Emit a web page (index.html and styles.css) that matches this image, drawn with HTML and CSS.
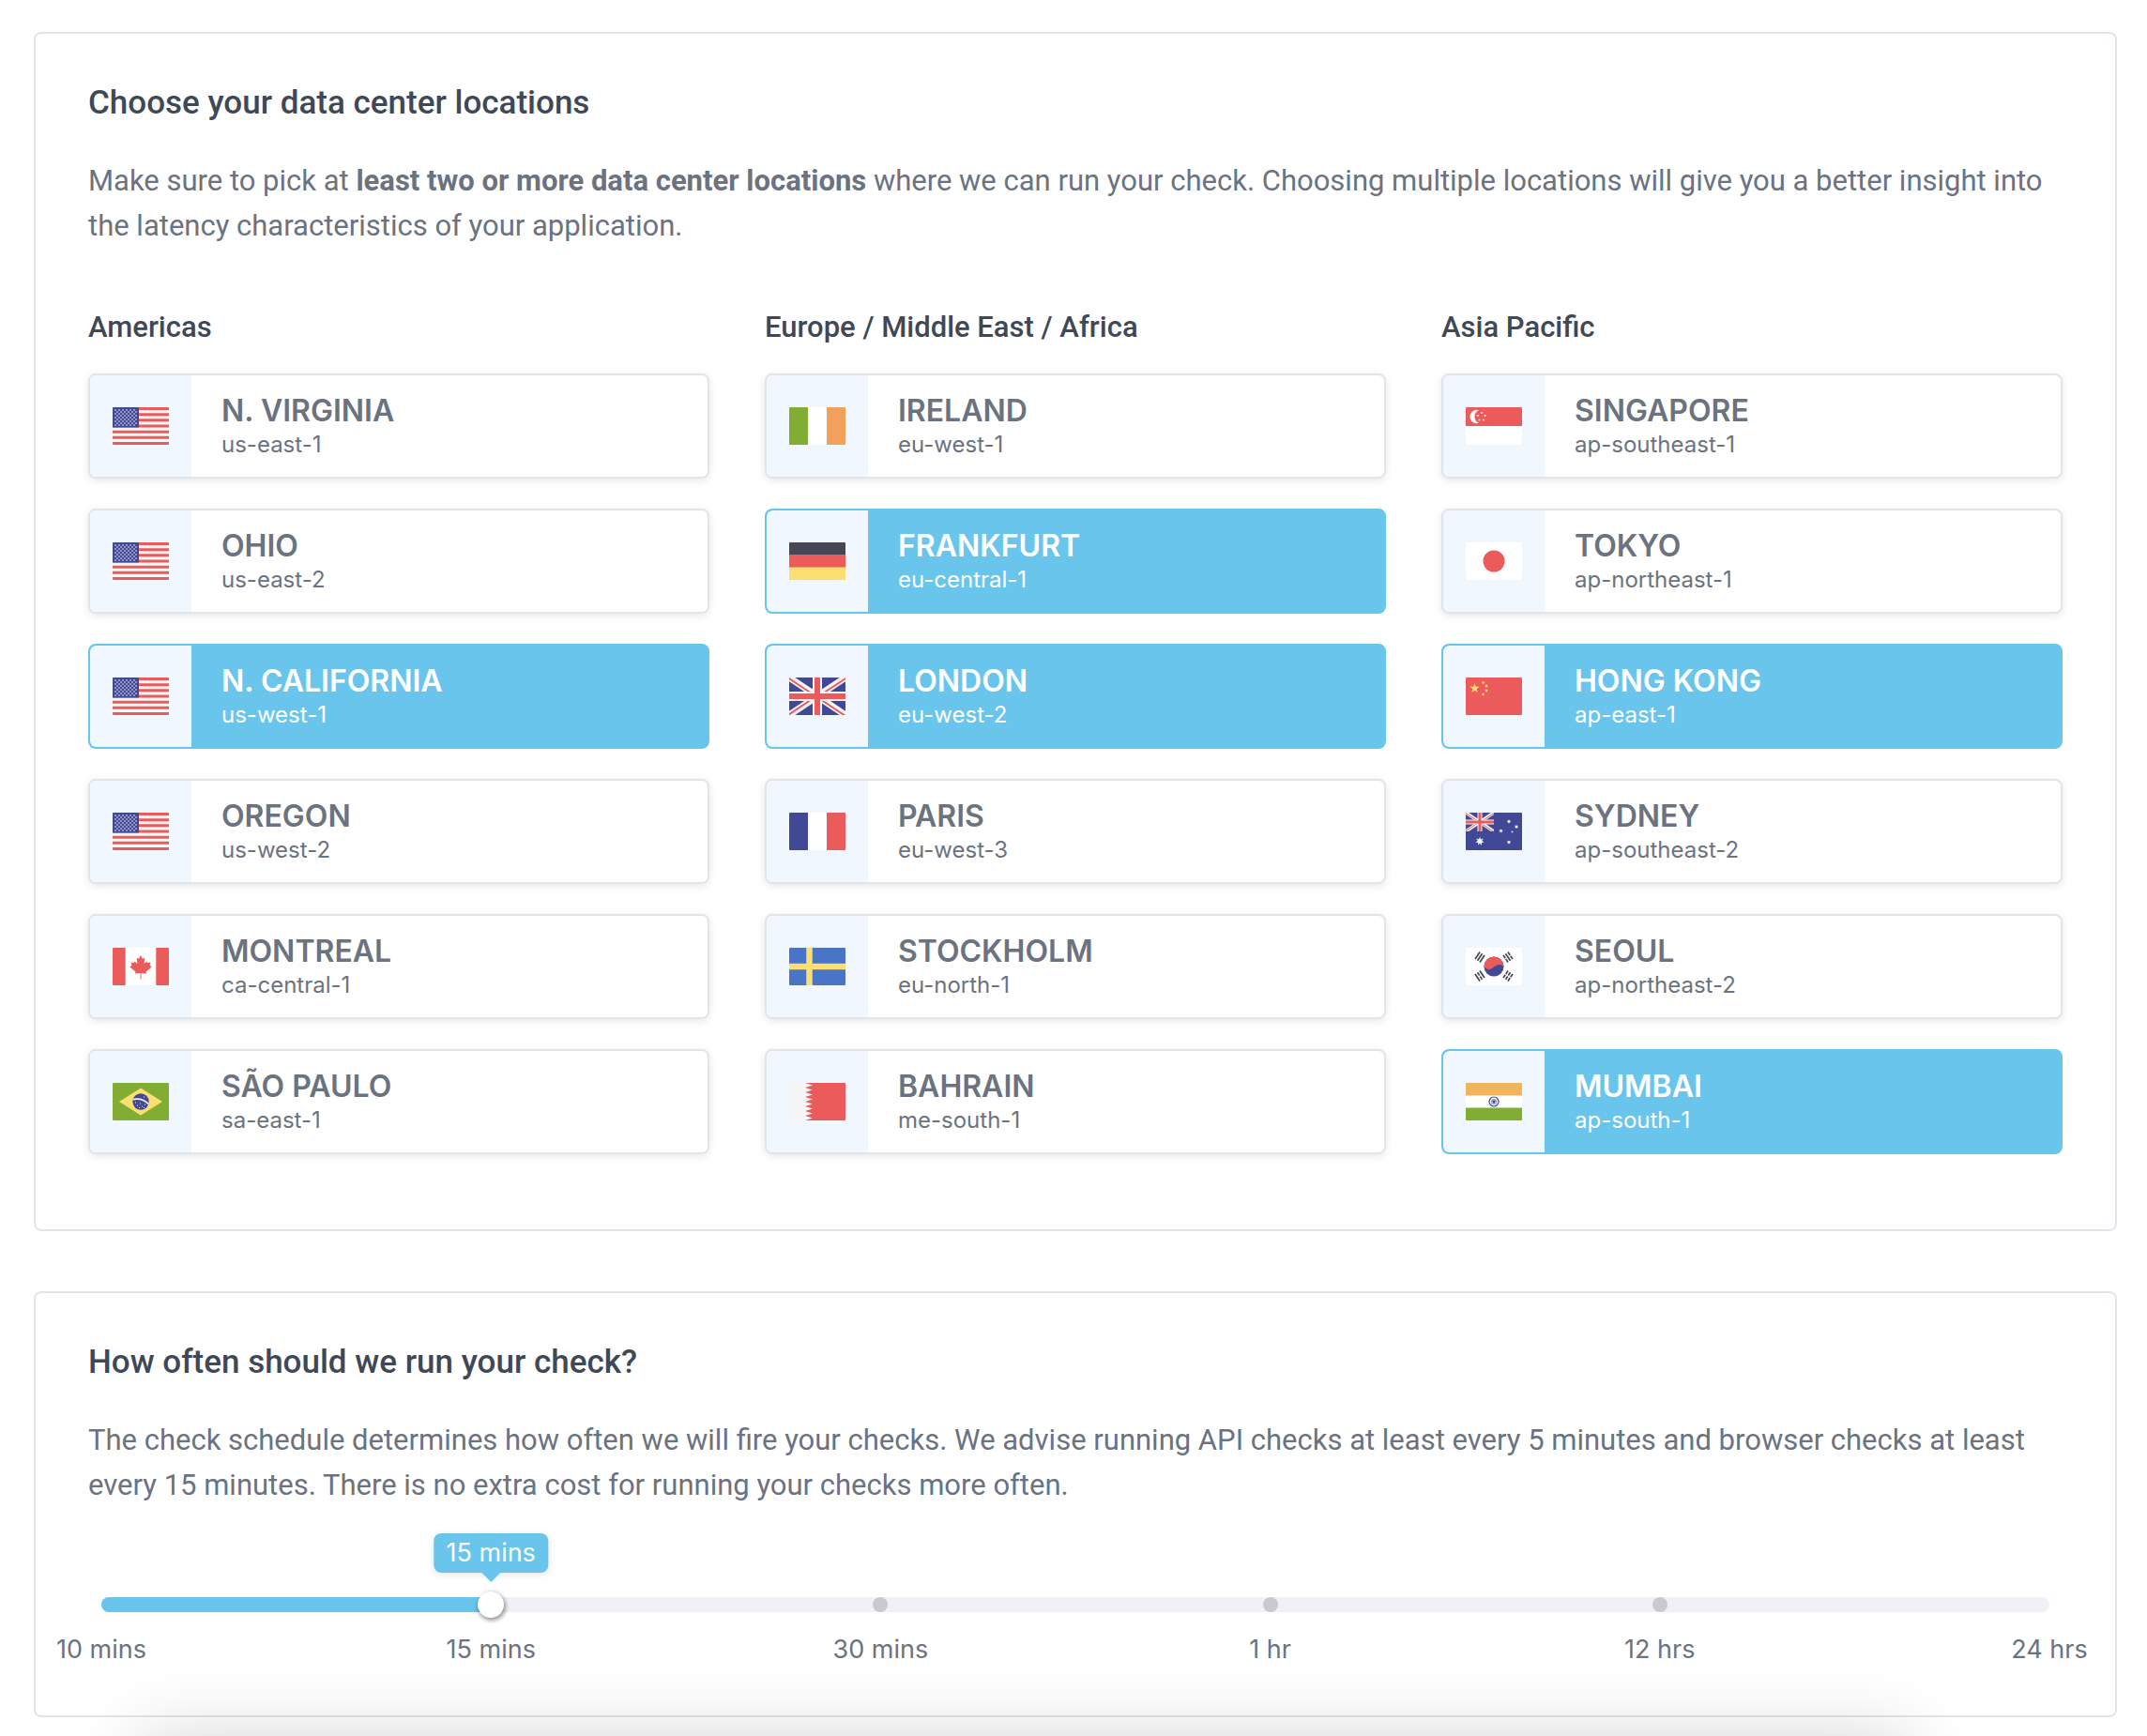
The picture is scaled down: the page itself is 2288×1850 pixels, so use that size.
FILE: index.html
```html
<!DOCTYPE html>
<html lang="en">
<head>
  <meta charset="UTF-8">
  <meta name="viewport" content="width=device-width, initial-scale=1.0">
  <title>Check locations and schedule</title>
  <link rel="stylesheet" href="styles.css">
</head>
<body>
  <!-- Flag sprites -->
  <svg class="sprites" aria-hidden="true">
    <defs>
      <clipPath id="flag-clip"><rect width="60" height="40" rx="1"/></clipPath>
      <clipPath id="jack-clip"><rect width="60" height="40"/></clipPath>
      <pattern id="us-stars" width="4" height="4" patternUnits="userSpaceOnUse">
        <circle cx="1" cy="1" r=".8" fill="#f5f5f5"/>
        <circle cx="3" cy="3" r=".8" fill="#f5f5f5"/>
      </pattern>
      <path id="star" d="M0-1 .24-.32.95-.31.38.12.59.81 0 .4-.59.81-.38.12-.95-.31-.24-.32z"/>
      <path id="star7" d="M0-1 .2-.42.78-.62.46-.1.97.22.37.3.43.9 0 .47-.43.9-.37.3-.97.22-.46-.1-.78-.62-.2-.42z"/>
      <g id="jack" clip-path="url(#jack-clip)">
        <rect width="60" height="40" fill="#414896"/>
        <path d="M0 0 60 40M60 0 0 40" stroke="#f5f5f5" stroke-width="7"/>
        <path d="M-1 0.5 27 19M33 23 60 41M61 0.5 35 17.5M25 22.5-1 40" stroke="#ec5b5b" stroke-width="2"/>
        <path d="M30 0V40M0 20H60" stroke="#f5f5f5" stroke-width="10"/>
        <path d="M30 0V40M0 20H60" stroke="#ec5b5b" stroke-width="6"/>
      </g>
    </defs>

    <symbol id="us" viewBox="0 0 60 40">
      <g clip-path="url(#flag-clip)">
        <rect width="60" height="40" fill="#f5f5f5"/>
        <path d="M0 1.5H60M0 7.7H60M0 13.8H60M0 20H60M0 26.2H60M0 32.3H60M0 38.5H60" stroke="#ec5b5b" stroke-width="3"/>
        <rect width="28" height="21.5" fill="#414896"/>
        <rect x="2" y="2" width="24" height="18" fill="url(#us-stars)"/>
      </g>
    </symbol>
    <symbol id="ca" viewBox="0 0 60 40">
      <g clip-path="url(#flag-clip)">
        <rect width="60" height="40" fill="#fff"/>
        <path d="M0 0H13.7V40H0zM46.3 0H60V40H46.3z" fill="#ec5b5b"/>
        <path d="M30 8 32 11.8 34.3 10.8 33.6 17 36.4 14.4 37 16 40.4 15.4 39.6 18.8 41.6 20.4 35.6 25.4 36 27.6 30.4 27 30.5 33.4H29.5L29.6 27 24 27.6 24.4 25.4 18.4 20.4 20.4 18.8 19.6 15.4 23 16 23.6 14.4 26.4 17 25.7 10.8 28 11.8z" fill="#ec5b5b"/>
      </g>
    </symbol>
    <symbol id="br" viewBox="0 0 60 40">
      <g clip-path="url(#flag-clip)">
        <rect width="60" height="40" fill="#82ad33"/>
        <path d="M30 5.5 53 20 30 34.5 7 20z" fill="#fbe071"/>
        <circle cx="30" cy="20" r="8.7" fill="#414896"/>
        <path d="M21.5 17.6Q31.500 15.500 38.200 22.500" fill="none" stroke="#f5f5f5" stroke-width="1.8"/>
        <path d="M24 21h1M26 24h1M29 22h1M31 25h1M34 23h1M33 26.500h1M28 26.500h1M33 15h1" stroke="#f5f5f5"/>
      </g>
    </symbol>
    <symbol id="ie" viewBox="0 0 60 40">
      <g clip-path="url(#flag-clip)">
        <rect width="60" height="40" fill="#fff"/>
        <rect width="20" height="40" fill="#82ad33"/>
        <rect x="40" width="20" height="40" fill="#f3a05c"/>
      </g>
    </symbol>
    <symbol id="de" viewBox="0 0 60 40">
      <g clip-path="url(#flag-clip)">
        <rect width="60" height="40" fill="#ec5b5b"/>
        <rect width="60" height="13" fill="#464655"/>
        <rect y="26.5" width="60" height="13.5" fill="#fbe071"/>
      </g>
    </symbol>
    <symbol id="gb" viewBox="0 0 60 40">
      <use href="#jack"/>
    </symbol>
    <symbol id="fr" viewBox="0 0 60 40">
      <g clip-path="url(#flag-clip)">
        <rect width="60" height="40" fill="#fff"/>
        <rect width="20" height="40" fill="#414896"/>
        <rect x="40" width="20" height="40" fill="#ec5b5b"/>
      </g>
    </symbol>
    <symbol id="se" viewBox="0 0 60 40">
      <g clip-path="url(#flag-clip)">
        <rect width="60" height="40" fill="#4a74c6"/>
        <path d="M21.5 0V40M0 20H60" stroke="#fbe071" stroke-width="6.5"/>
      </g>
    </symbol>
    <symbol id="bh" viewBox="0 0 60 40">
      <g clip-path="url(#flag-clip)">
        <rect width="60" height="40" fill="#f5f5f5"/>
        <path d="M60 0H17L25 2.500 17 5 25 7.500 17 10 25 12.500 17 15 25 17.500 17 20 25 22.500 17 25 25 27.500 17 30 25 32.500 17 35 25 37.500 17 40H60z" fill="#ec5b5b"/>
      </g>
    </symbol>
    <symbol id="sg" viewBox="0 0 60 40">
      <g clip-path="url(#flag-clip)">
        <rect width="60" height="40" fill="#fff"/>
        <rect width="60" height="20" fill="#ec5b5b"/>
        <path d="M14 3.200A7.200 7.200 0 1 0 14 16.800 7.400 7.400 0 0 1 14 3.200z" fill="#fff"/>
        <g fill="#fff">
          <use href="#star" transform="translate(17 6) scale(1.500)"/>
          <use href="#star" transform="translate(13 9) scale(1.500)"/>
          <use href="#star" transform="translate(20.500 9) scale(1.500)"/>
          <use href="#star" transform="translate(14.500 13.500) scale(1.500)"/>
          <use href="#star" transform="translate(19 13.500) scale(1.500)"/>
        </g>
      </g>
    </symbol>
    <symbol id="jp" viewBox="0 0 60 40">
      <rect width="60" height="40" rx="1" fill="#fff"/>
      <circle cx="30" cy="20" r="11.5" fill="#ec5b5b"/>
    </symbol>
    <symbol id="cn" viewBox="0 0 60 40">
      <rect width="60" height="40" rx="1" fill="#ec5b5b"/>
      <g fill="#fbe071">
        <use href="#star" transform="translate(9.500 11.500) scale(5.500)"/>
        <use href="#star" transform="translate(18.500 5.500) rotate(20) scale(2.200)"/>
        <use href="#star" transform="translate(22 9) rotate(40) scale(2.200)"/>
        <use href="#star" transform="translate(22 14) scale(2.200)"/>
        <use href="#star" transform="translate(18.500 18) rotate(20) scale(2.200)"/>
      </g>
    </symbol>
    <symbol id="au" viewBox="0 0 60 40">
      <rect width="60" height="40" rx="1" fill="#414896"/>
      <use href="#jack" transform="scale(.5)"/>
      <g fill="#f5f5f5">
        <use href="#star7" transform="translate(15 30.500) scale(4.800)"/>
        <use href="#star7" transform="translate(46 9.500) scale(2.300)"/>
        <use href="#star7" transform="translate(54 15) scale(2.300)"/>
        <use href="#star7" transform="translate(37.500 19.500) scale(2.300)"/>
        <use href="#star" transform="translate(49.500 20.500) scale(1.400)"/>
        <use href="#star7" transform="translate(46 31.500) scale(2.300)"/>
      </g>
    </symbol>
    <symbol id="kr" viewBox="0 0 60 40">
      <rect width="60" height="40" rx="1" fill="#fff"/>
      <circle cx="30" cy="20" r="10.500" fill="#414896"/>
      <path d="M19.500 20A10.500 10.500 0 0 1 40.500 20C37 17 33.500 17.500 30 20.500 26.500 23.500 22.500 24 19.500 20z" fill="#ec5b5b"/>
      <g stroke="#464655" stroke-width="1.700">
        <path d="M-4.500-3H4.500M-4.500 0H4.500M-4.500 3H4.500" transform="translate(15 10) rotate(-56)"/>
        <path d="M-4.500-3H-.5M.5-3H4.500M-4.500 0H4.500M-4.500 3H-.5M.5 3H4.500" transform="translate(45 10) rotate(56)"/>
        <path d="M-4.500-3H4.500M-4.500 0H-.5M.5 0H4.500M-4.500 3H4.500" transform="translate(15 30) rotate(56)"/>
        <path d="M-4.500-3H-.5M.5-3H4.500M-4.500 0H-.5M.5 0H4.500M-4.500 3H-.5M.5 3H4.500" transform="translate(45 30) rotate(-56)"/>
      </g>
    </symbol>
    <symbol id="in" viewBox="0 0 60 40">
      <g clip-path="url(#flag-clip)">
        <rect width="60" height="40" fill="#fff"/>
        <rect width="60" height="13.5" fill="#efb55d"/>
        <rect y="26.5" width="60" height="13.5" fill="#82ad33"/>
        <circle cx="30" cy="20" r="5" fill="none" stroke="#414896" stroke-width="1.200"/>
        <circle cx="30" cy="20" r="3.300" fill="#414896" fill-opacity=".45"/>
        <circle cx="30" cy="20" r="1.400" fill="#414896"/>
      </g>
    </symbol>
  </svg>

  <main class="page">
    <section class="card card-locations">
      <h2>Choose your data center locations</h2>
      <p>Make sure to pick at <strong>least two or more data center locations</strong> where we can run your check. Choosing multiple locations will give you a better insight into the latency characteristics of your application.</p>
      <div class="regions">
        <div class="region">
          <h3>Americas</h3>
          <label class="location">
            <input type="checkbox" name="location" value="us-east-1">
            <span class="flag"><svg><use href="#us"/></svg></span>
            <span class="info"><span class="city">N. VIRGINIA</span><span class="code">us-east-1</span></span>
          </label>
          <label class="location">
            <input type="checkbox" name="location" value="us-east-2">
            <span class="flag"><svg><use href="#us"/></svg></span>
            <span class="info"><span class="city">OHIO</span><span class="code">us-east-2</span></span>
          </label>
          <label class="location">
            <input type="checkbox" name="location" value="us-west-1" checked>
            <span class="flag"><svg><use href="#us"/></svg></span>
            <span class="info"><span class="city">N. CALIFORNIA</span><span class="code">us-west-1</span></span>
          </label>
          <label class="location">
            <input type="checkbox" name="location" value="us-west-2">
            <span class="flag"><svg><use href="#us"/></svg></span>
            <span class="info"><span class="city">OREGON</span><span class="code">us-west-2</span></span>
          </label>
          <label class="location">
            <input type="checkbox" name="location" value="ca-central-1">
            <span class="flag"><svg><use href="#ca"/></svg></span>
            <span class="info"><span class="city">MONTREAL</span><span class="code">ca-central-1</span></span>
          </label>
          <label class="location">
            <input type="checkbox" name="location" value="sa-east-1">
            <span class="flag"><svg><use href="#br"/></svg></span>
            <span class="info"><span class="city">SÃO PAULO</span><span class="code">sa-east-1</span></span>
          </label>
        </div>
        <div class="region">
          <h3>Europe / Middle East / Africa</h3>
          <label class="location">
            <input type="checkbox" name="location" value="eu-west-1">
            <span class="flag"><svg><use href="#ie"/></svg></span>
            <span class="info"><span class="city">IRELAND</span><span class="code">eu-west-1</span></span>
          </label>
          <label class="location">
            <input type="checkbox" name="location" value="eu-central-1" checked>
            <span class="flag"><svg><use href="#de"/></svg></span>
            <span class="info"><span class="city">FRANKFURT</span><span class="code">eu-central-1</span></span>
          </label>
          <label class="location">
            <input type="checkbox" name="location" value="eu-west-2" checked>
            <span class="flag"><svg><use href="#gb"/></svg></span>
            <span class="info"><span class="city">LONDON</span><span class="code">eu-west-2</span></span>
          </label>
          <label class="location">
            <input type="checkbox" name="location" value="eu-west-3">
            <span class="flag"><svg><use href="#fr"/></svg></span>
            <span class="info"><span class="city">PARIS</span><span class="code">eu-west-3</span></span>
          </label>
          <label class="location">
            <input type="checkbox" name="location" value="eu-north-1">
            <span class="flag"><svg><use href="#se"/></svg></span>
            <span class="info"><span class="city">STOCKHOLM</span><span class="code">eu-north-1</span></span>
          </label>
          <label class="location">
            <input type="checkbox" name="location" value="me-south-1">
            <span class="flag"><svg><use href="#bh"/></svg></span>
            <span class="info"><span class="city">BAHRAIN</span><span class="code">me-south-1</span></span>
          </label>
        </div>
        <div class="region">
          <h3>Asia Pacific</h3>
          <label class="location">
            <input type="checkbox" name="location" value="ap-southeast-1">
            <span class="flag"><svg><use href="#sg"/></svg></span>
            <span class="info"><span class="city">SINGAPORE</span><span class="code">ap-southeast-1</span></span>
          </label>
          <label class="location">
            <input type="checkbox" name="location" value="ap-northeast-1">
            <span class="flag"><svg><use href="#jp"/></svg></span>
            <span class="info"><span class="city">TOKYO</span><span class="code">ap-northeast-1</span></span>
          </label>
          <label class="location">
            <input type="checkbox" name="location" value="ap-east-1" checked>
            <span class="flag"><svg><use href="#cn"/></svg></span>
            <span class="info"><span class="city">HONG KONG</span><span class="code">ap-east-1</span></span>
          </label>
          <label class="location">
            <input type="checkbox" name="location" value="ap-southeast-2">
            <span class="flag"><svg><use href="#au"/></svg></span>
            <span class="info"><span class="city">SYDNEY</span><span class="code">ap-southeast-2</span></span>
          </label>
          <label class="location">
            <input type="checkbox" name="location" value="ap-northeast-2">
            <span class="flag"><svg><use href="#kr"/></svg></span>
            <span class="info"><span class="city">SEOUL</span><span class="code">ap-northeast-2</span></span>
          </label>
          <label class="location">
            <input type="checkbox" name="location" value="ap-south-1" checked>
            <span class="flag"><svg><use href="#in"/></svg></span>
            <span class="info"><span class="city">MUMBAI</span><span class="code">ap-south-1</span></span>
          </label>
        </div>
      </div>
    </section>

    <section class="card">
      <h2><label for="frequency">How often should we run your check?</label></h2>
      <p>The check schedule determines how often we will fire your checks. We advise running API checks at least every 5 minutes and browser checks at least every 15 minutes. There is no extra cost for running your checks more often.</p>
      <div class="slider">
        <div class="track">
          <div class="fill" style="width: 20%"></div>
          <span class="dot" style="left: 40%"></span>
          <span class="dot" style="left: 60%"></span>
          <span class="dot" style="left: 80%"></span>
          <output class="tooltip" for="frequency" style="left: 20%">15 mins</output>
        </div>
        <input type="range" id="frequency" min="0" max="5" step="1" value="1">
      </div>
      <div class="ticks">
        <span>10 mins</span>
        <span>15 mins</span>
        <span>30 mins</span>
        <span>1 hr</span>
        <span>12 hrs</span>
        <span>24 hrs</span>
      </div>
    </section>
  </main>
  <div class="bottom-shadow"></div>
</body>
</html>
```
FILE: styles.css
```css
* { box-sizing: border-box; }
body { margin: 0; background: #fff; color: #6b7280; font-family: Inter, "Liberation Sans", sans-serif; font-size: 31px; line-height: 48px; }
.sprites { position: absolute; width: 0; height: 0; }

.page { padding: 34px 32px 20px 36px; }
.card { padding: 50px 56px; border: 2px solid #e1e5eb; border-radius: 8px; background: #fff; }
.card-locations { margin-bottom: 64px; padding-bottom: 80px; }
h2, h3, p { font-family: Roboto, "Liberation Sans", sans-serif; }
h2 { margin: 0 0 35px; color: #3f4857; font-size: 35px; font-weight: 500; line-height: 48px; }
h3 { margin: 0 0 25px; color: #3f4857; font-size: 31px; font-weight: 500; line-height: 48px; }
p { margin: 0; }
strong { font-weight: 700; }

/* Locations */
.regions { display: grid; grid-template-columns: repeat(3, 1fr); gap: 59px; margin-top: 60px; }
.location { position: relative; display: flex; height: 112px; margin-bottom: 32px; border: 2px solid #e1e5eb; border-radius: 8px; background: #fff; box-shadow: 0 2px 8px rgba(0, 0, 0, 0.1); overflow: hidden; cursor: pointer; }
.location:last-child { margin-bottom: 0; }
.location input { position: absolute; opacity: 0; margin: 0; }
.flag { display: flex; align-items: center; justify-content: center; width: 108px; background: #f0f7ff; }
.flag svg { width: 60px; height: 40px; }
.info { display: flex; flex-direction: column; justify-content: center; padding: 2px 0 0 32px; }
.city { font-size: 32px; font-weight: 600; line-height: 38px; }
.code { font-size: 24px; line-height: 34px; }
.location:has(input:checked) { border-color: #6ac5ed; background: #6ac5ed; color: #fff; box-shadow: none; }
.location:has(input:checked) .flag { border-radius: 6px 0 0 6px; }

/* Schedule slider */
.slider { position: relative; margin-top: 89px; padding: 6px 14px; }
.track { position: relative; height: 16px; border-radius: 8px; background: #f0f1f7; }
.fill { height: 16px; border-radius: 8px; background: #6ac5ed; }
.dot { position: absolute; top: 0; width: 16px; height: 16px; margin-left: -8px; border-radius: 50%; background: #c9cacf; }
.slider input { position: absolute; top: 0; left: 0; width: 100%; height: 28px; margin: 0; background: none; -webkit-appearance: none; appearance: none; }
.slider input::-webkit-slider-thumb { -webkit-appearance: none; width: 28px; height: 28px; border-radius: 50%; background: #fff; box-shadow: 1px 2px 4px 1px rgba(0, 0, 0, 0.4); }
.tooltip { position: absolute; bottom: 42px; padding: 0 13px; border-radius: 8px; background: #6ac5ed; color: #fff; font-size: 27px; line-height: 42px; white-space: nowrap; transform: translateX(-50%); box-shadow: 0 2px 8px rgba(0, 0, 0, 0.1); }
.tooltip::after { content: ""; position: absolute; top: 100%; left: 50%; margin-left: -10px; border: 10px solid transparent; border-top-color: #6ac5ed; border-bottom: 0; }
.ticks { display: flex; justify-content: space-between; margin-top: 14px; padding: 0 14px; font-size: 27px; line-height: 40px; }
.ticks span { display: flex; justify-content: center; width: 0; white-space: nowrap; }

.bottom-shadow { position: fixed; top: 100%; left: 150px; right: 254px; height: 200px; box-shadow: 0 0 80px rgba(0, 0, 0, 0.16); pointer-events: none; }
```
